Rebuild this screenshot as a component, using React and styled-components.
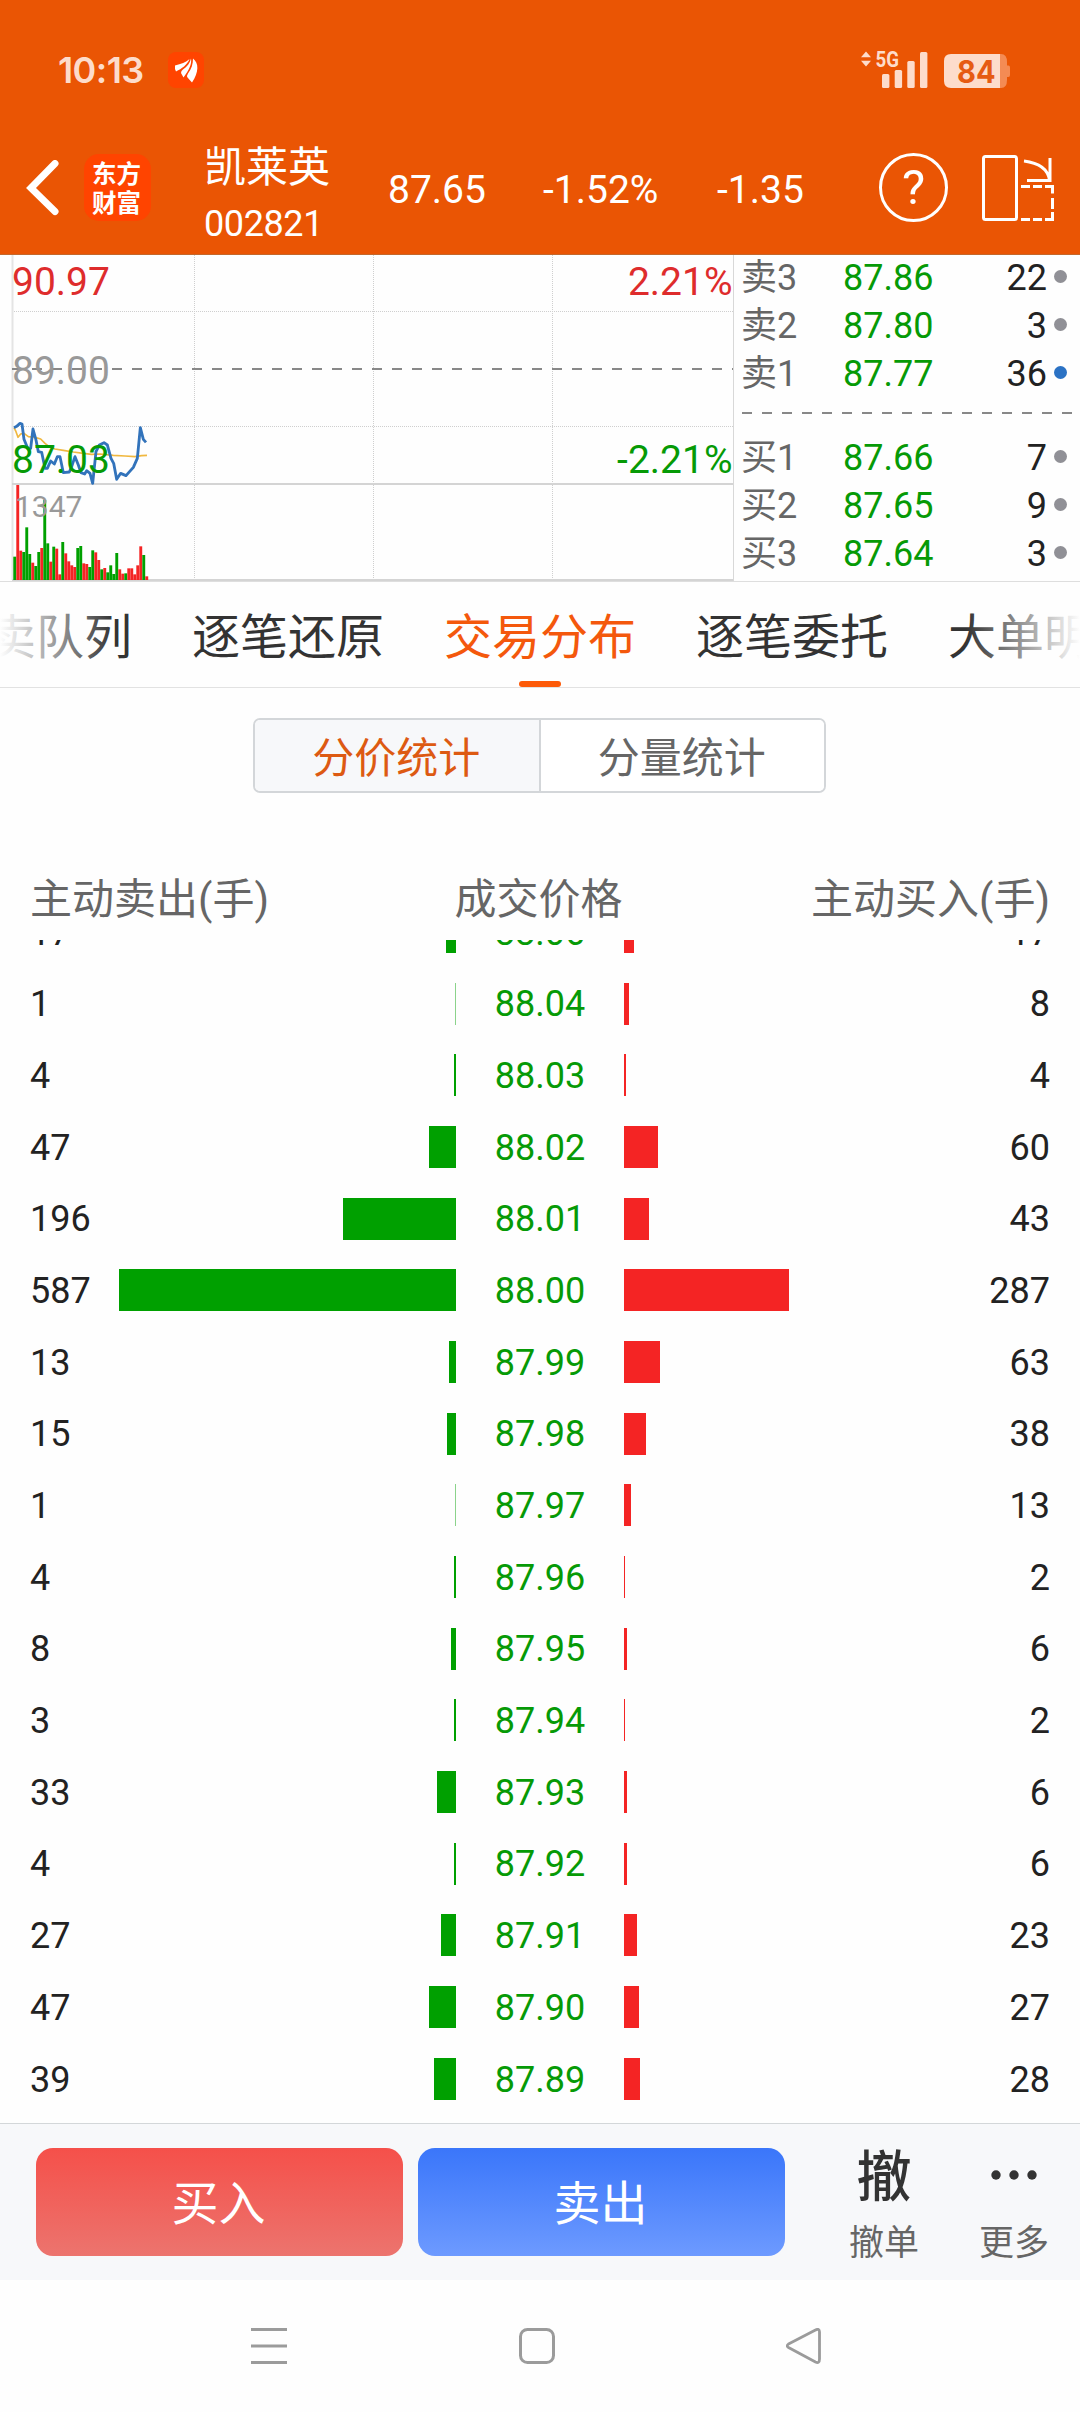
import React from "react";
import styled, { createGlobalStyle } from "styled-components";

const GREEN = "#069a06";
const RED = "#de2c2c";

const GlobalStyle = createGlobalStyle`
  * { box-sizing: border-box; }
  body {
    margin: 0;
    background: #fff;
    font-family: Roboto, "Noto Sans CJK SC", sans-serif;
    color: #222;
  }
  svg { display: block; flex: none; }
`;

const Screen = styled.div`
  width: 1080px;
  height: 2412px;
  display: flex;
  flex-direction: column;
  overflow: hidden;
  background: #fefefe;
`;

/* ---------- header ---------- */
const Header = styled.header`
  height: 255px;
  background: #ea5504;
  border-bottom: 1px solid #c4682c;
  color: #fff;
  flex: none;
`;

const StatusBar = styled.div`
  height: 140px;
  padding: 0 70px 0 58px;
  display: flex;
  align-items: center;
  justify-content: space-between;
`;

const StatusGroup = styled.div`
  display: flex;
  align-items: center;
`;

const Clock = styled.span`
  width: 110px;
  font: 600 36px/40px Inter, sans-serif;
  letter-spacing: -0.6px;
  color: #fddccb;
`;

const StockBar = styled.div`
  height: 114px;
  display: flex;
  align-items: center;
  padding: 0 25px 19px 26px;
`;

const AppLogo = styled.div`
  width: 67px;
  height: 67px;
  margin-left: 24px;
  padding: 0 2px 2px 0;
  border-radius: 15px;
  background: #ff4400;
  display: flex;
  flex-direction: column;
  align-items: center;
  justify-content: center;
  font: 700 24.5px/29px "Noto Sans CJK SC", sans-serif;
`;

const StockName = styled.div`
  width: 184px;
  margin: 17px 0 0 53px;
  display: flex;
  flex-direction: column;
`;

const NameText = styled.span`
  font-size: 42px;
  line-height: 56px;
`;

const CodeText = styled.span`
  font-size: 36px;
  line-height: 56px;
  letter-spacing: -0.4px;
`;

const Quote = styled.span`
  width: ${(p) => p.$w}px;
  padding-top: 5px;
  font-size: 39px;
  line-height: 46px;
`;

const HelpButton = styled.div`
  width: 69px;
  height: 69px;
  border: 3px solid #fff;
  border-radius: 50%;
  display: flex;
  align-items: center;
  justify-content: center;
  font-size: 49px;
  line-height: 60px;
  margin-right: 33px;
`;

/* ---------- chart and order book ---------- */
const Market = styled.section`
  height: 327px;
  display: flex;
  border-bottom: 1px solid #dedede;
  flex: none;
`;

const Book = styled.div`
  flex: 1;
  padding: 0 8px 0 7px;
`;

const BookRow = styled.div`
  height: 48px;
  display: grid;
  grid-template-columns: 102px 120px 1fr 25px;
  align-items: center;
  font-size: 36px;
  line-height: 48px;
`;

const BookSide = styled.div`
  margin-top: ${(p) => p.$top}px;
`;

const Level = styled.span`color: #666;`;
const BookPrice = styled.span`color: ${GREEN};`;
const BookQty = styled.span`text-align: right;`;
const Dot = styled.i`
  width: 13px;
  height: 13px;
  margin: 0 0 4px 7px;
  border-radius: 50%;
  justify-self: start;
  background: ${(p) => (p.$active ? "#2b72c4" : "#909096")};
`;

const BookDivider = styled.div`
  height: 2px;
  margin: 14px 0 0 1px;
  background: repeating-linear-gradient(90deg, #888 0 10px, transparent 10px 20px);
`;

/* ---------- tabs ---------- */
const Tabs = styled.nav`
  height: 106px;
  flex: none;
  display: flex;
  gap: 60px;
  border-bottom: 1px solid #e2e2e2;
  overflow: hidden;
  position: relative;
  &::before, &::after {
    content: "";
    position: absolute;
    top: 0;
    width: 114px;
    height: 100px;
  }
  &::before { left: 0; background: linear-gradient(90deg, #fefefe, #fefefe00); }
  &::after { right: 0; background: linear-gradient(270deg, #fefefe, #fefefe00); }
`;

const Tab = styled.div`
  flex: none;
  height: 105px;
  display: flex;
  flex-direction: column;
  align-items: center;
  font-size: 48px;
  line-height: 99px;
  padding-top: 6px;
  color: ${(p) => (p.$active ? "#f4580c" : "#333")};
  &:first-child { margin-left: -60px; }
`;

const TabMark = styled.i`
  width: 42px;
  height: 6px;
  margin-top: -6px;
  border-radius: 3px;
  background: #fd5a08;
`;

/* ---------- segmented control ---------- */
const Segments = styled.div`
  width: 573px;
  height: 75px;
  margin: 30px 0 0 253px;
  flex: none;
  display: flex;
  border: 2px solid #d3d6d9;
  border-radius: 7px;
  overflow: hidden;
`;

const Segment = styled.div`
  flex: 1;
  padding-right: 1px;
  text-align: center;
  font-size: 42px;
  line-height: 77px;
  color: ${(p) => (p.$active ? "#dd5a12" : "#666")};
  background: ${(p) => (p.$active ? "#f7f8fa" : "#fff")};
  & + & { border-left: 2px solid #d3d6d9; }
`;

/* ---------- distribution table ---------- */
const TableHead = styled.div`
  height: 147px;
  padding: 77px 30px 0;
  flex: none;
  display: grid;
  grid-template-columns: 1fr 1fr 1fr;
  font-size: 42px;
  line-height: 60px;
  color: #666;
`;

const HeadCell = styled.span`
  text-align: ${(p) => p.$align};
  padding-right: ${(p) => p.$end || 0}px;
`;

const TableBody = styled.div`
  height: 1183px;
  flex: none;
  overflow: hidden;
`;

const Rows = styled.div`
  margin-top: -44px;
`;

const Row = styled.div`
  height: 71.69px;
  padding: 0 30px;
  display: grid;
  grid-template-columns: 86px 340px 168px 340px 86px;
  align-items: center;
  font-size: 36px;
  line-height: 42px;
`;

const Count = styled.span`
  padding-top: 1.4px;
  text-align: ${(p) => p.$align || "left"};
`;

const Price = styled.span`
  padding-top: 1.4px;
  text-align: center;
  color: ${GREEN};
`;

const Bar = styled.i`
  height: 42px;
  justify-self: ${(p) => (p.$sell ? "end" : "start")};
  background: ${(p) => (p.$sell ? "#00a000" : "#f42424")};
`;

/* ---------- bottom ---------- */
const ActionBar = styled.footer`
  height: 157px;
  flex: none;
  display: flex;
  padding: 24px 0 0 36px;
  border-top: 1px solid #d3d7d9;
  background: #f7f8fa;
`;

const TradeButton = styled.div`
  width: 367px;
  height: 108px;
  margin-right: 15px;
  padding-right: 2px;
  border-radius: 17px;
  text-align: center;
  font-size: 47px;
  line-height: 111px;
  color: #fff;
  background: ${(p) =>
    p.$buy
      ? "linear-gradient(#f5504a, #ec746e)"
      : "linear-gradient(#3a76fa, #6d9aff)"};
`;

const ActionItem = styled.div`
  width: 130px;
  margin-left: ${(p) => p.$gap || 0}px;
  display: flex;
  flex-direction: column;
  align-items: center;
`;

const ActionGlyph = styled.span`
  height: 70px;
  font: 500 55px/58px Roboto, "Noto Sans CJK SC", sans-serif;
  color: #333;
  display: flex;
`;

const ActionLabel = styled.span`
  font-size: 35px;
  line-height: 51px;
  color: #666;
`;

const SystemNav = styled.div`
  height: 132px;
  flex: none;
  display: flex;
  align-items: flex-start;
  padding: 48px 0 0 251px;
  gap: 232px;
`;

const BackIcon = styled.svg`
  margin-left: -1px;
`;

/* ---------- data ---------- */
const asks = [["卖3", "87.86", 22], ["卖2", "87.80", 3], ["卖1", "87.77", 36, true]];
const bids = [["买1", "87.66", 7], ["买2", "87.65", 9], ["买3", "87.64", 3]];

const rows = [
  [17, "88.06", 17], [1, "88.04", 8], [4, "88.03", 4], [47, "88.02", 60],
  [196, "88.01", 43], [587, "88.00", 287], [13, "87.99", 63], [15, "87.98", 38],
  [1, "87.97", 13], [4, "87.96", 2], [8, "87.95", 6], [3, "87.94", 2],
  [33, "87.93", 6], [4, "87.92", 6], [27, "87.91", 23], [47, "87.90", 27],
  [39, "87.89", 28],
];

const volumes =
  "G70 R285 R88 G84 G158 G78 R52 G42 G84 R96 G240 G110 R55 G100 R94 R17 G114 R80 R56 R44 R39 G96 G102 R50 R48 G39 G89 R83 R60 G32 R36 G23 G44 G18 G81 R32 R19 G20 R35 R35 R17 R44 R101 G75 R11".split(" ");

const priceLine =
  "42,533 50,529 60,520 66,522 72,568 84,597 92,595 99,537 108,570 115,605 125,607 135,655 142,655 152,633 163,642 172,620 180,620 190,668 208,666 215,650 225,620 235,645 243,668 254,672 260,662 270,670 278,700 288,605 298,585 312,578 322,585 333,625 341,640 350,688 362,670 378,677 400,652 412,625 421,533 430,568 438,577";
const averageLine =
  "42,533 48,545 54,562 62,552 72,550 85,560 105,562 122,567 135,580 150,592 165,597 190,601 220,606 250,610 275,613 300,612 340,616 375,618 405,620 425,617 441,616";

function MinuteChart() {
  const label = { fontFamily: "Roboto, sans-serif", fontSize: 39 };
  return (
    <svg width="734" height="326" viewBox="0 255 734 326">
      <g stroke="#cfcfcf" strokeWidth="1" strokeDasharray="1 1">
        <path d="M12 311.5H733M12 426.5H733M194.5 255V580M373.5 255V580M552.5 255V580" />
      </g>
      <path d="M12.5 255V580" stroke="#e4e4e4" strokeWidth="2" />
      <path d="M12 484H733M12 580H733" stroke="#d4d4d4" strokeWidth="2" />
      <path d="M12 369H733" stroke="#888" strokeWidth="2" strokeDasharray="10 10" />
      {volumes.map((v, i) => {
        const h = Number(v.slice(1)) / 3;
        return (
          <rect key={i} x={13.3 + i * 3} y={580 - h} width="2.9" height={h}
            fill={v[0] === "G" ? "#00a000" : "#f42424"} />
        );
      })}
      <g transform="translate(0 250) scale(0.33333)" fill="none" strokeLinejoin="round">
        <polyline points={averageLine} stroke="#f0b840" strokeWidth="5" />
        <polyline points={priceLine} stroke="#3273bb" strokeWidth="8.5" />
      </g>
      <text x="12" y="295" fill={RED} {...label}>90.97</text>
      <text x="12" y="384" fill="#999" {...label}>89.00</text>
      <text x="12" y="473" fill={GREEN} {...label}>87.03</text>
      <text x="15" y="517" fill="#999" {...label} fontSize="30">1347</text>
      <text x="732.5" y="295" fill={RED} textAnchor="end" {...label}>2.21%</text>
      <text x="732.5" y="473" fill={GREEN} textAnchor="end" {...label}>-2.21%</text>
      <path d="M733.8 255V581" stroke="#c8c8c8" strokeWidth="1" />
    </svg>
  );
}

function StatusIcons() {
  return (
    <svg width="150" height="40" viewBox="860 50 150 40" fill="#fddccb">
      <path d="M866 51.5l5 5.7h-10zM866 66.5l5-5.7h-10z" />
      <text x="875.5" y="66.5" fontFamily="Roboto, sans-serif" fontWeight="700" fontSize="21.5" textLength="23.5" lengthAdjust="spacingAndGlyphs">5G</text>
      <rect x="882" y="74" width="7.4" height="14" rx="1.5" />
      <rect x="894.7" y="70" width="7.4" height="18" rx="1.5" />
      <rect x="907.3" y="61" width="7.4" height="27" rx="1.5" />
      <rect x="920" y="52" width="7.4" height="36" rx="1.5" />
      <path d="M1000 54h1q6 0 6 8v3.500h1.500q1.500 0 1.500 2v7.500q0 2-1.500 2H1007v3q0 8-6 8h-1z" fill="#f48b54" />
      <path d="M1000 54V88H951q-7 0-7-7V61q0-7 7-7z" />
      <text x="957" y="82.5" fontFamily="Inter, sans-serif" fontWeight="700" fontSize="31" fill="#e65b12" textLength="38.5" lengthAdjust="spacingAndGlyphs">84</text>
    </svg>
  );
}

function BookRows({ items }) {
  return items.map(([level, price, qty, active]) => (
    <BookRow key={level}>
      <Level>{level}</Level>
      <BookPrice>{price}</BookPrice>
      <BookQty>{qty}</BookQty>
      <Dot $active={active} />
    </BookRow>
  ));
}

const barStyle = (n) => {
  const w = n * 0.574;
  return { width: Math.max(1, Math.round(w)), opacity: w < 1 ? 0.45 : 1 };
};

export default function App() {
  return (
    <Screen>
      <GlobalStyle />
      <Header>
        <StatusBar>
          <StatusGroup>
            <Clock>10:13</Clock>
            <svg width="36" height="36" viewBox="0 0 36 36">
              <rect width="36" height="36" rx="8" fill="#ff4400" />
              <g fill="#fff">
                <path d="M7 13.500C13 12 18 10.500 21.500 7C19 13 14 16.500 8 19.500Q6.500 17 7 13.500z" />
                <path d="M23 6.500C24 12 21 18 15.500 25.500L13 21Q13 18.500 15 17.500C19 15 22 11 23 6.500z" />
                <path d="M25 6.500C31 11 31 20 24 30.500L19.500 25.500Q18.500 23.500 20 21.500C23.500 17 25 12 25 6.500z" />
              </g>
            </svg>
          </StatusGroup>
          <StatusIcons />
        </StatusBar>
        <StockBar>
          <svg width="34" height="56" viewBox="0 0 34 56" fill="none" stroke="#fff" strokeWidth="7" strokeLinecap="round">
            <path d="M29 3.500L5 28L29 51.500" />
          </svg>
          <AppLogo><span>东方</span><span>财富</span></AppLogo>
          <StockName>
            <NameText>凯莱英</NameText>
            <CodeText>002821</CodeText>
          </StockName>
          <Quote $w={155}>87.65</Quote>
          <Quote $w={174}>-1.52%</Quote>
          <Quote $w={162}>-1.35</Quote>
          <HelpButton>?</HelpButton>
          <svg width="74" height="70" viewBox="981 152 74 70" fill="none" stroke="#fff" strokeWidth="3">
            <rect x="983.500" y="155.500" width="33" height="63" rx="2" />
            <path d="M1024 160C1040 162 1048 169 1049.500 179M1050 157V179.500H1027" />
            <path d="M1021 185.500h9M1033 185.500h9M1045 185.500h7.500v7M1052.500 197v11M1052.500 211v7.500h-7.500M1042 218.500h-9M1030 218.500h-9" />
          </svg>
        </StockBar>
      </Header>

      <Market>
        <MinuteChart />
        <Book>
          <BookSide $top={-1}><BookRows items={asks} /></BookSide>
          <BookDivider />
          <BookSide $top={20}><BookRows items={bids} /></BookSide>
        </Book>
      </Market>

      <Tabs>
        <Tab>买卖队列</Tab>
        <Tab>逐笔还原</Tab>
        <Tab $active>交易分布<TabMark /></Tab>
        <Tab>逐笔委托</Tab>
        <Tab>大单明细</Tab>
      </Tabs>

      <Segments>
        <Segment $active>分价统计</Segment>
        <Segment>分量统计</Segment>
      </Segments>

      <TableHead>
        <HeadCell $align="left">主动卖出(手)</HeadCell>
        <HeadCell $align="center" $end={3}>成交价格</HeadCell>
        <HeadCell $align="right">主动买入(手)</HeadCell>
      </TableHead>

      <TableBody>
        <Rows>
          {rows.map(([sell, price, buy]) => (
            <Row key={price}>
              <Count>{sell}</Count>
              <Bar $sell style={barStyle(sell)} />
              <Price>{price}</Price>
              <Bar style={barStyle(buy)} />
              <Count $align="right">{buy}</Count>
            </Row>
          ))}
        </Rows>
      </TableBody>

      <ActionBar>
        <TradeButton $buy>买入</TradeButton>
        <TradeButton>卖出</TradeButton>
        <ActionItem $gap={19}>
          <ActionGlyph>撤</ActionGlyph>
          <ActionLabel>撤单</ActionLabel>
        </ActionItem>
        <ActionItem>
          <ActionGlyph>
            <svg width="50" height="54" viewBox="0 0 50 54" fill="#333">
              <circle cx="7" cy="27" r="4.700" />
              <circle cx="25" cy="27" r="4.700" />
              <circle cx="43" cy="27" r="4.700" />
            </svg>
          </ActionGlyph>
          <ActionLabel>更多</ActionLabel>
        </ActionItem>
      </ActionBar>

      <SystemNav>
        <svg width="36" height="36" viewBox="0 0 36 36" stroke="#9b9b9b" strokeWidth="3">
          <path d="M0 1.500H36M0 18H36M0 34.500H36" />
        </svg>
        <svg width="36" height="36" viewBox="0 0 36 36" fill="none" stroke="#9b9b9b" strokeWidth="3">
          <rect x="1.500" y="1.500" width="33" height="33" rx="7" />
        </svg>
        <BackIcon width="36" height="36" viewBox="0 0 36 36" fill="none" stroke="#9b9b9b" strokeWidth="2.800" strokeLinejoin="round">
          <path d="M29.500 2Q33.500 0 33.500 4V31Q33.500 36 29.500 34L2.500 19.500Q0 18 2.500 16Z" />
        </BackIcon>
      </SystemNav>
    </Screen>
  );
}
